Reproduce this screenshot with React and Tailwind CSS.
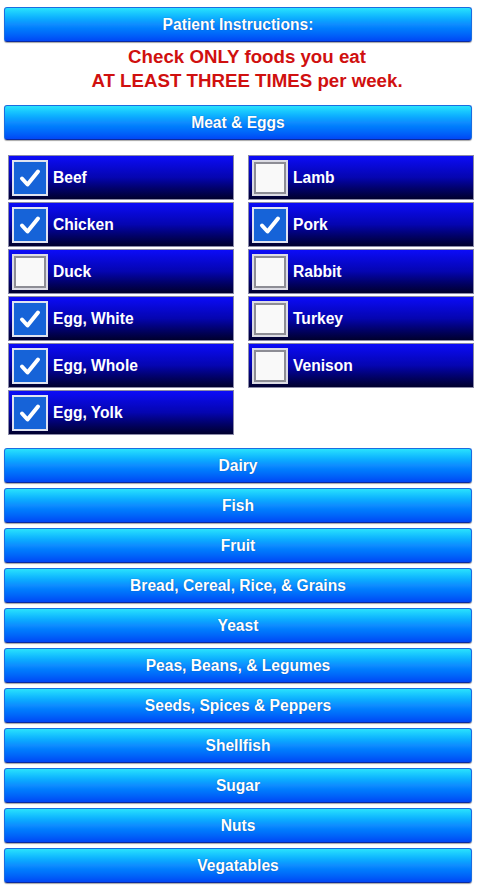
import React from "react";

const font = { fontFamily: '"Liberation Sans", Arial, sans-serif' };

function Bar({ children }) {
  return (
    <div className="ml-[4px] w-[468px] h-[35px] rounded-[3px] border border-[#1a6de0] border-b-[#0a2aa0] bg-gradient-to-b from-[#2ae2fc] via-[#0f8cff] to-[#0346f5] flex items-center justify-center pt-[1px] text-white font-bold text-[15.6px] shadow-[0_1px_1px_rgba(0,0,0,0.35)] [text-shadow:0_0_1px_rgba(0,0,60,0.5)]">
      {children}
    </div>
  );
}

function Check({ checked }) {
  if (checked) {
    return (
      <div className="w-[36px] h-[36px] shrink-0 border-2 border-[#dfe3f0] bg-[#1663d8] flex items-center justify-center">
        <svg width="26" height="26" viewBox="0 0 26 26">
          <polyline points="5,13.5 10.5,19.5 21,6.5" fill="none" stroke="white" strokeWidth="4" strokeLinecap="round" strokeLinejoin="round" />
        </svg>
      </div>
    );
  }
  return (
    <div className="w-[36px] h-[36px] shrink-0 border-2 border-[#dcdce4] bg-[#f7f7f7] p-0">
      <div className="w-full h-full border-2 border-[#8d8d95] bg-[#f9f9f9]" />
    </div>
  );
}

function Item({ label, checked }) {
  return (
    <div className="h-[45px] border border-[#8a8aa8] bg-gradient-to-b from-[#0c0cf8] via-[#0505b0] to-[#00002e] flex items-center pl-[3px] gap-[5px]">
      <Check checked={checked} />
      <span className="text-white font-bold text-[15.6px]">{label}</span>
    </div>
  );
}

export default function App() {
  const left = [
    ["Beef", true],
    ["Chicken", true],
    ["Duck", false],
    ["Egg, White", true],
    ["Egg, Whole", true],
    ["Egg, Yolk", true],
  ];
  const right = [
    ["Lamb", false],
    ["Pork", true],
    ["Rabbit", false],
    ["Turkey", false],
    ["Venison", false],
  ];
  const cats = [
    "Dairy",
    "Fish",
    "Fruit",
    "Bread, Cereal, Rice, & Grains",
    "Yeast",
    "Peas, Beans, & Legumes",
    "Seeds, Spices & Peppers",
    "Shellfish",
    "Sugar",
    "Nuts",
    "Vegatables",
  ];
  return (
    <div style={font} className="w-[480px] min-h-[887px] bg-white pt-[7px]">
      <Bar>Patient Instructions:</Bar>
      <div className="mt-[3px] pl-[14px] text-center text-[#d0100f] font-bold text-[18.7px] leading-[24px]">
        <div>Check ONLY foods you eat</div>
        <div>AT LEAST THREE TIMES per week.</div>
      </div>
      <div className="mt-[12px]">
        <Bar>Meat &amp; Eggs</Bar>
      </div>
      <div className="ml-[8px] w-[466px] mt-[15px] grid grid-cols-2 gap-x-[14px]">
        <div className="flex flex-col gap-[2px]">
          {left.map(([l, c]) => (
            <Item key={l} label={l} checked={c} />
          ))}
        </div>
        <div className="flex flex-col gap-[2px]">
          {right.map(([l, c]) => (
            <Item key={l} label={l} checked={c} />
          ))}
        </div>
      </div>
      <div className="mt-[13px] flex flex-col gap-[5px]">
        {cats.map((c) => (
          <Bar key={c}>{c}</Bar>
        ))}
      </div>
    </div>
  );
}
